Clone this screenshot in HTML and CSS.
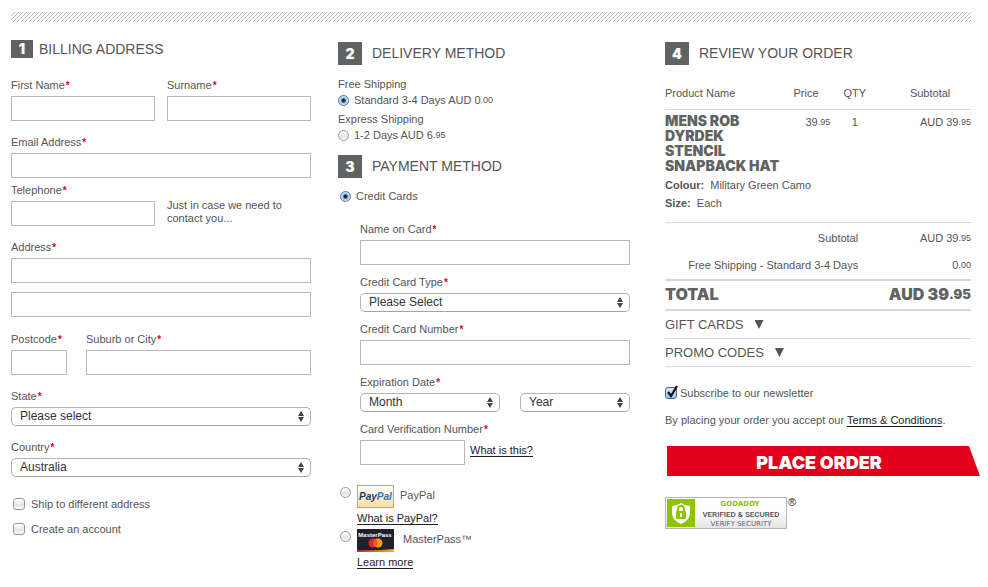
FILE: index.html
```html
<!DOCTYPE html>
<html lang="en">
<head>
<meta charset="utf-8">
<meta name="viewport" content="width=device-width, initial-scale=1">
<title>Checkout</title>
<link rel="stylesheet" href="styles.css">
</head>
<body>
<form class="checkout">
  <div class="stripes"></div>
  <div class="columns">

    <section class="billing">
      <h2 class="step step-small"><span class="step-number">1</span>BILLING ADDRESS</h2>
      <div class="row halves">
        <div class="field"><label for="first">First Name<b class="req">*</b></label><input class="text" id="first" type="text"></div>
        <div class="field"><label for="surname">Surname<b class="req">*</b></label><input class="text" id="surname" type="text"></div>
      </div>
      <div class="field"><label for="email">Email Address<b class="req">*</b></label><input class="text" id="email" type="email"></div>
      <div class="row halves tight">
        <div class="field"><label for="phone">Telephone<b class="req">*</b></label><input class="text" id="phone" type="tel"></div>
        <p class="hint">Just in case we need to contact you...</p>
      </div>
      <div class="field"><label for="address">Address<b class="req">*</b></label><input class="text" id="address" type="text"><input class="text second-line" type="text" aria-label="Address line 2"></div>
      <div class="row city">
        <div class="field"><label for="postcode">Postcode<b class="req">*</b></label><input class="text" id="postcode" type="text"></div>
        <div class="field"><label for="suburb">Suburb or City<b class="req">*</b></label><input class="text" id="suburb" type="text"></div>
      </div>
      <div class="field"><label for="state">State<b class="req">*</b></label><select id="state"><option>Please select</option></select></div>
      <div class="field"><label for="country">Country<b class="req">*</b></label><select id="country"><option>Australia</option></select></div>
      <div class="checks">
        <label class="check"><input type="checkbox">Ship to different address</label>
        <label class="check"><input type="checkbox">Create an account</label>
      </div>
    </section>

    <section class="delivery">
      <h2 class="step"><span class="step-number">2</span>DELIVERY METHOD</h2>
      <div class="methods">
        <p>Free Shipping</p>
        <label class="method"><input type="radio" name="ship" checked><span>Standard 3-4 Days AUD 0<small>.00</small></span></label>
        <p>Express Shipping</p>
        <label class="method"><input type="radio" name="ship"><span>1-2 Days AUD 6<small>.95</small></span></label>
      </div>
      <h2 class="step"><span class="step-number">3</span>PAYMENT METHOD</h2>
      <label class="method card-method"><input type="radio" name="pay" checked><span>Credit Cards</span></label>
      <div class="card-fields">
        <div class="field"><label for="cardname">Name on Card<b class="req">*</b></label><input class="text" id="cardname" type="text"></div>
        <div class="field"><label for="cardtype">Credit Card Type<b class="req">*</b></label><select id="cardtype"><option>Please Select</option></select></div>
        <div class="field"><label for="cardnumber">Credit Card Number<b class="req">*</b></label><input class="text" id="cardnumber" type="text"></div>
        <div class="field"><label for="month">Expiration Date<b class="req">*</b></label>
          <div class="expiry">
            <select id="month"><option>Month</option></select>
            <select aria-label="Expiration year"><option>Year</option></select>
          </div>
        </div>
        <div class="field"><label for="cvn">Card Verification Number<b class="req">*</b></label>
          <div class="cvn"><input class="text" id="cvn" type="text"><a href="#">What is this?</a></div>
        </div>
      </div>
      <div class="wallets">
        <div class="wallet">
          <input type="radio" name="pay" id="paypal">
          <label for="paypal">
            <svg class="brand" width="37" height="23" viewBox="0 0 37 23" aria-hidden="true">
              <defs><linearGradient id="cream" x1="0" y1="0" x2="0" y2="1"><stop offset="0" stop-color="#fff"/><stop offset="1" stop-color="#fbdca0"/></linearGradient></defs>
              <rect x=".5" y=".5" width="36" height="22" fill="url(#cream)" stroke="#f79c3c"/>
              <text class="pp" x="2" y="15"><tspan fill="#1c3a73">Pay</tspan><tspan fill="#2b78b5">Pal</tspan></text>
            </svg>
            <span>PayPal</span>
          </label>
          <a href="#">What is PayPal?</a>
        </div>
        <div class="wallet">
          <input type="radio" name="pay" id="masterpass">
          <label for="masterpass" class="wide">
            <svg class="brand" width="37" height="23" viewBox="0 0 37 23" aria-hidden="true">
              <defs><linearGradient id="band"><stop offset="0" stop-color="#d9232b"/><stop offset="1" stop-color="#fbb21a"/></linearGradient></defs>
              <rect width="37" height="23" fill="#23202d"/>
              <path d="M0 21 Q18 22 37 20 V23 H0Z" fill="url(#band)"/>
              <circle cx="16" cy="14" r="4.500" fill="#dc2530"/>
              <circle cx="21" cy="14" r="4.500" fill="#f79a20"/>
              <path d="M18.500 10.300 a4.500 4.500 0 0 1 0 7.400 a4.500 4.500 0 0 1 0-7.400" fill="#ec5b27"/>
              <text class="mp" x="18" y="8" fill="#fff">MasterPass</text>
            </svg>
            <span>MasterPass™</span>
          </label>
          <a href="#">Learn more</a>
        </div>
      </div>
    </section>

    <section class="review">
      <h2 class="step"><span class="step-number">4</span>REVIEW YOUR ORDER</h2>
      <table class="order">
        <colgroup><col class="c-name"><col class="c-price"><col class="c-qty"><col class="c-sub"></colgroup>
        <thead>
          <tr><th>Product Name</th><th>Price</th><th class="mid">QTY</th><th class="mid sub">Subtotal</th></tr>
        </thead>
        <tbody>
          <tr class="item">
            <td><h3>MENS ROB DYRDEK STENCIL SNAPBACK HAT</h3></td>
            <td class="num">39<small>.95</small></td><td class="mid">1</td><td class="num">AUD 39<small>.95</small></td>
          </tr>
          <tr class="details"><td colspan="4"><p><b>Colour:</b>&nbsp; Military Green Camo</p><p><b>Size:</b>&nbsp; Each</p></td></tr>
        </tbody>
        <tfoot>
          <tr class="sum"><td colspan="3">Subtotal</td><td>AUD 39<small>.95</small></td></tr>
          <tr class="sum"><td colspan="3">Free Shipping - Standard 3-4 Days</td><td>0<small>.00</small></td></tr>
        </tfoot>
      </table>
      <div class="total"><span>TOTAL</span><span>AUD 39<small>.95</small></span></div>
      <button type="button" class="fold">GIFT CARDS<i></i></button>
      <button type="button" class="fold">PROMO CODES<i></i></button>
      <label class="newsletter">
        <span class="tick"><input type="checkbox" checked><svg width="14" height="14" viewBox="0 0 14 14" aria-hidden="true"><path d="M3 7 L6 11 L12 1" fill="none" stroke="#111" stroke-width="2.200"/></svg></span>Subscribe to our newsletter
      </label>
      <p class="terms">By placing your order you accept our <a href="#">Terms &amp; Conditions</a>.</p>
      <button type="submit" class="place">PLACE ORDER</button>
      <div class="seal">
        <svg width="122" height="32" viewBox="0 0 122 32" role="img" aria-label="Verified and secured">
          <defs><linearGradient id="silver" x1="0" y1="0" x2="0" y2="1"><stop offset=".4" stop-color="#fff"/><stop offset="1" stop-color="#e4e4e4"/></linearGradient></defs>
          <rect x=".5" y=".5" width="121" height="31" fill="url(#silver)" stroke="#b5b5b5"/>
          <rect x="2" y="2" width="28" height="28" fill="#8fc400"/>
          <path d="M16 6 Q20 9 25 9 V17 Q24 24 16 27 Q8 24 7 17 V9 Q12 9 16 6Z" fill="#fff"/>
          <rect x="11" y="14" width="10" height="8" rx="1" fill="#8fc400"/>
          <path d="M13 14 V12 a3 3 0 0 1 6 0 V14" fill="none" stroke="#8fc400" stroke-width="2"/>
          <path d="M16 16 V20" stroke="#fff" stroke-width="2"/>
          <text class="s1" x="75" y="9">GODADDY</text>
          <text class="s2" x="76" y="20">VERIFIED &amp; SECURED</text>
          <text class="s3" x="76" y="29">VERIFY SECURITY</text>
        </svg>
        <span>®</span>
      </div>
    </section>
  </div>
</form>
</body>
</html>
```
FILE: styles.css
```css
* { box-sizing: border-box; }

body {
  margin: 0;
  background: #fff;
  color: #555;
  font: 11px/14px "Liberation Sans", Arial, sans-serif;
}

p, h2, h3 { margin: 0; }
a { color: #222; text-decoration: none; border-bottom: 1px solid #222; line-height: 12px; }
small { font-size: 9px; vertical-align: 1px; line-height: 1; }
svg { display: block; }

.checkout { padding: 12px 17px 10px 11px; }

.stripes {
  height: 10px;
  background: url("data:image/svg+xml,%3Csvg xmlns='http://www.w3.org/2000/svg' width='4' height='4' shape-rendering='crispEdges'%3E%3Cpath fill='%23b8b8b8' d='M3 0h1v1h-1zM2 1h1v1h-1zM1 2h1v1h-1zM0 3h1v1h-1z'/%3E%3C/svg%3E");
}

.columns {
  display: grid;
  grid-template-columns: repeat(3, minmax(0, 1fr));
  gap: 21px;
}

/* Step headings */
.step {
  display: flex;
  align-items: center;
  gap: 10px;
  font-size: 14px;
  font-weight: normal;
  line-height: 23px;
}
.step-number {
  width: 24px;
  background: #5f6362;
  color: #fff;
  font-family: Inter, "Liberation Sans", sans-serif;
  font-weight: 900;
  text-align: center;
}
.step-small { gap: 6px; line-height: 18px; }
.step-small .step-number { width: 22px; }

/* Fields */
.field > label { display: block; margin-bottom: 4px; }
.req { color: #e2001a; margin-left: 1px; font-size: 10px; line-height: 1; }

.text {
  display: block;
  width: 100%;
  height: 25px;
  padding: 0 6px;
  border: 1px solid #b8b8b8;
  border-radius: 0;
  background: #fff;
  font: inherit;
}

select {
  appearance: none;
  display: block;
  width: 100%;
  height: 19px;
  padding: 0 20px 2px 8px;
  border: 1px solid #b4b4b4;
  border-bottom-color: #a4a4a4;
  border-radius: 5px;
  background: #fff url("data:image/svg+xml,%3Csvg xmlns='http://www.w3.org/2000/svg' width='6' height='11'%3E%3Cpath fill='%23444' d='M3 0L6 5H0zM3 11L6 6H0z'/%3E%3C/svg%3E") no-repeat right 6px center;
  color: #333;
  font: 12px/16px "Liberation Sans", Arial, sans-serif;
}

input[type="radio"], input[type="checkbox"] {
  appearance: none;
  flex: none;
  margin: 0;
  border: 1px solid #999;
  background: linear-gradient(#fff, #e6e6e6 60%, #fafafa);
}
input[type="radio"] { width: 11px; height: 11px; border-radius: 50%; }
input[type="checkbox"] { width: 12px; height: 12px; border-radius: 3px; }
input[type="radio"]:checked {
  border-color: #5874a8;
  background: radial-gradient(circle, #122 0 1px, #a9ccf0 3px, #d8ecfc 5px);
}
input[type="checkbox"]:checked { border-color: #4a6699; background: linear-gradient(#d8eafa, #9cc4ee); }

/* Billing column */
.billing {
  display: flex;
  flex-direction: column;
  gap: 14px;
  padding: 18px 6px 0 0;
}
.billing .step { margin-bottom: 6px; }
.row { display: grid; }
.halves { grid-template-columns: 1fr 1fr; gap: 12px; }
.tight { margin-top: -9px; }
.hint { padding-top: 16px; line-height: 13px; }
.second-line { margin-top: 9px; }
.city { grid-template-columns: 56fr 225fr; gap: 19px; padding-top: 1px; }
.checks { display: grid; gap: 11px; padding: 6px 0 0 2px; }
.check { display: flex; align-items: center; gap: 6px; }

/* Delivery and payment column */
.delivery { padding: 20px 14px 0 0; }
.methods { padding: 11px 0 9px; }
.methods p { line-height: 16px; }
.methods .method { margin-bottom: 3px; }
.method { display: flex; align-items: center; gap: 5px; line-height: 16px; }
.card-method { padding: 10px 0 0 2px; }
.card-fields { display: grid; gap: 10px; padding: 18px 0 0 22px; }
.expiry { display: grid; grid-template-columns: 14fr 11fr; gap: 20px; }
.cvn { display: flex; align-items: center; gap: 5px; }
.cvn .text { width: 105px; }
.cvn a { margin-bottom: 4px; }

.wallets { padding: 20px 0 0 2px; }
.wallet { display: grid; grid-template-columns: 17px 1fr; row-gap: 4px; margin-bottom: 4px; justify-items: start; }
.wallet input { margin-top: 2px; }
.wallet label { display: flex; align-items: center; gap: 6px; }
.wallet label span { padding-bottom: 3px; }
.wallet .wide { gap: 9px; }
.wallet a { grid-column: 2; }
.pp { font: italic 900 10px "Liberation Sans", sans-serif; }
.mp { font: bold 6px "Liberation Sans", sans-serif; text-anchor: middle; }

/* Review column */
.review { padding-top: 20px; }
.order { width: 100%; margin-top: 13px; border-collapse: collapse; table-layout: fixed; }
.order th, .order td { padding: 0; font-weight: normal; text-align: left; vertical-align: top; }
.order th { height: 31px; padding-top: 8px; border-bottom: 1px solid #d8d8d8; white-space: nowrap; }
.order .mid { text-align: center; }
.order .sub { padding-left: 10px; }
.order .num { text-align: right; white-space: nowrap; }
.c-name { width: 42%; }
.c-price { width: 12%; }
.c-qty { width: 16%; }
.c-sub { width: 30%; }
.item td { padding-top: 5px; }
.item td:first-child { padding-top: 3px; }
h3 { padding-right: 10px; font: 900 14px/15px Inter, "Liberation Sans", sans-serif; color: #5f6362; }
.details p { line-height: 18px; }
.order .details td { padding: 3px 0 10px; }
.order tfoot { border-top: 1px solid #d8d8d8; }
.order .sum td { height: 28px; padding-top: 8px; text-align: right; }
.order .sum:last-child td { height: 29px; }
.order .sum td:first-child { padding-right: 21px; }

.total {
  display: flex;
  justify-content: space-between;
  padding-bottom: 2px;
  border: solid #d8d8d8;
  border-width: 2px 0;
  color: #5f6362;
  font: 900 16px/26px Inter, "Liberation Sans", sans-serif;
}
.total small { font-size: 13px; }

.fold {
  display: flex;
  align-items: center;
  gap: 11px;
  width: 100%;
  height: 28px;
  padding: 0;
  border: 0;
  border-bottom: 1px solid #d8d8d8;
  background: none;
  color: #555;
  font: 13px/27px "Liberation Sans", Arial, sans-serif;
}
.fold i { width: 9px; height: 9px; background: #555; clip-path: polygon(0 0, 100% 0, 50% 100%); }

.newsletter { display: flex; align-items: center; gap: 3px; margin-top: 19px; }
.tick { position: relative; }
.tick input { display: block; }
.tick svg { position: absolute; left: 0; bottom: 0; }
.terms { margin-top: 13px; }

.place {
  display: block;
  width: calc(100% + 7px);
  height: 30px;
  margin: 19px -9px 0 2px;
  padding: 4px 9px 0 0;
  border: 0;
  background: #e2001a;
  color: #fff;
  font: 900 18px/26px Inter, "Liberation Sans", sans-serif;
  clip-path: polygon(0 0, calc(100% - 11px) 0, 100% 100%, 0 100%);
}

.seal { display: flex; gap: 1px; margin-top: 21px; }
.seal span { line-height: 10px; color: #222; }
.seal text { text-anchor: middle; }
.s1 { font: bold 7px "DejaVu Sans", sans-serif; fill: #8fc400; }
.s2 { font: 500 8px Roboto, sans-serif; fill: #4b5058; }
.s3 { font: 7px "DejaVu Sans", sans-serif; fill: #5b6075; }
```
